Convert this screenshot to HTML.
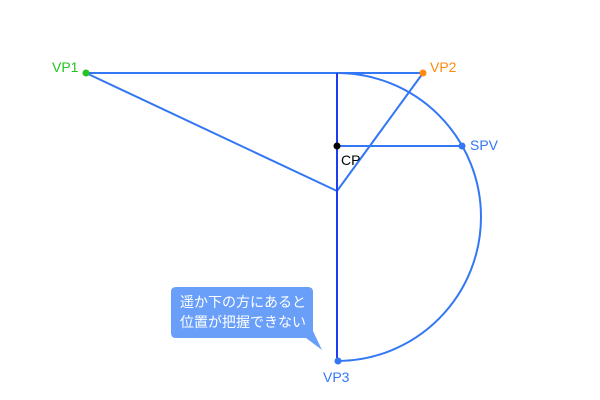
<!DOCTYPE html>
<html><head><meta charset="utf-8"><style>
html,body{margin:0;padding:0;background:#fff;width:600px;height:400px;overflow:hidden}
svg{position:absolute;left:0;top:0}
text{font-family:"Liberation Sans","Noto Sans CJK JP",sans-serif;font-size:14px}
</style></head><body>
<svg width="600" height="400" viewBox="0 0 600 400">
<g fill="none" stroke="#3377f5" stroke-width="2">
<line x1="86" y1="73" x2="423" y2="73"/>
<line x1="86" y1="73" x2="337" y2="191"/>
<line x1="423" y1="73" x2="337" y2="191"/>
<line x1="337" y1="146" x2="462" y2="146"/>
<path d="M337 73 A144 144 0 0 1 337 361"/>
</g>
<line x1="337" y1="73" x2="337" y2="361" stroke="#1a3ef0" stroke-width="2"/>
<circle cx="86" cy="73" r="3.5" fill="#22c422"/>
<circle cx="423" cy="73" r="3.5" fill="#ff8a10"/>
<circle cx="337" cy="146" r="3.5" fill="#000"/>
<circle cx="462" cy="146" r="3.5" fill="#3377f5"/>
<circle cx="338" cy="361" r="3.5" fill="#3377f5"/>
<text x="52" y="72" fill="#22c422">VP1</text>
<text x="430" y="72" fill="#ff8a10">VP2</text>
<text x="341" y="165" fill="#000">CP</text>
<text x="470" y="150" fill="#3377f5">SPV</text>
<text x="323" y="382" fill="#3377f5">VP3</text>
<path d="M176 287 H308 Q313 287 313 292 V331 L322 350 L306 338 H176 Q171 338 171 333 V292 Q171 287 176 287 Z" fill="#6a9ff9"/>
<text x="180" y="307" fill="#fff">遥か下の方にあると</text>
<text x="180" y="327" fill="#fff">位置が把握できない</text>
</svg>
</body></html>
